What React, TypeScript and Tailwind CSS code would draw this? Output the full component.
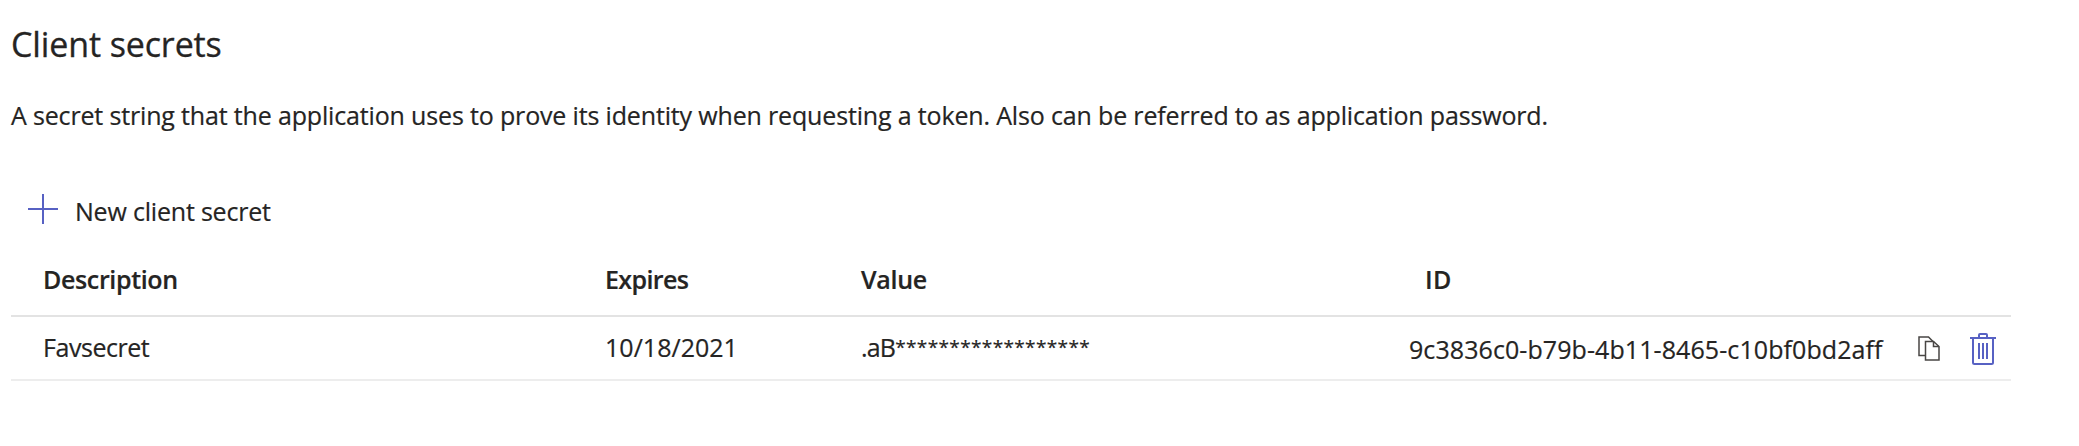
function PlusIcon() {
  return (
    <svg width="30" height="30" viewBox="0 0 30 30" fill="none" stroke="#5761c3" strokeWidth="2">
      <path d="M15 0v30M0 15h30" />
    </svg>
  );
}

function CopyIcon() {
  return (
    <svg width="22" height="25" viewBox="0 0 22 25" fill="none" stroke="#484644" strokeWidth="1.5">
      <path d="M7 19.500H1V1h9.500l4.500 4.500" />
      <path d="M7.500 5.500h8l5.500 5v13.500H7.500z" />
      <path d="M15.500 5.500v5H21" />
    </svg>
  );
}

function TrashIcon() {
  return (
    <svg width="26" height="32" viewBox="0 0 26 32" fill="none" stroke="#5761c3" strokeWidth="2">
      <path d="M0 5h26M9 5V2q0-1 1-1h6q1 0 1 1v3" />
      <path d="M3 5v24.500q0 1.500 1.500 1.500h17q1.500 0 1.500-1.500V5" />
      <path d="M9 10v16M13 10v16M17 10v16" />
    </svg>
  );
}

export default function App() {
  return (
    <main className="h-[446px] w-full bg-white pt-5 pl-[11px] font-['Open_Sans',sans-serif] text-[25px] leading-8 whitespace-nowrap text-[#252423]">
      <h1 className="text-[34px] leading-[48px] tracking-[-0.12px] [-webkit-text-stroke:0.3px_#252423]">Client secrets</h1>
      <p className="mt-[31px] tracking-[-0.16px] [-webkit-text-stroke:0.2px_#252423]">
        A secret string that the application uses to prove its identity when requesting a token. Also can be referred to
        as application password.
      </p>
      <button className="mt-[63px] flex h-[34px] items-start gap-[17px] pl-[17px]">
        <PlusIcon />
        <span className="pt-px tracking-[-0.2px] [-webkit-text-stroke:0.2px_#252423]">New client secret</span>
      </button>
      <div className="w-[2000px] [-webkit-text-stroke:0.2px_#252423]">
        <div className="mt-[35px] flex h-[54px] border-b-2 border-[#e3e3e3] pl-8 font-semibold">
          <span className="w-[562px] tracking-[-0.35px]">Description</span>
          <span className="w-[256px] tracking-[-0.6px]">Expires</span>
          <span className="w-[564px] tracking-[-0.27px]">Value</span>
          <span className="tracking-[0.4px]">ID</span>
        </div>
        <div className="flex h-16 border-b-2 border-[#ededed] pt-[14px] pl-8">
          <span className="w-[562px] tracking-[-0.45px]">Favsecret</span>
          <span className="w-[256px] tracking-[0.02px]">10/18/2021</span>
          <span className="flex w-[548px]">
            <span className="tracking-[-0.8px]">.aB</span>
            <span className="text-[19px] tracking-[0.36px]">******************</span>
          </span>
          <span className="w-[509px] pt-0.5 tracking-[0.08px]">9c3836c0-b79b-4b11-8465-c10bf0bd2aff</span>
          <div className="flex items-start gap-[30px]">
            <span className="pt-[5px]"><CopyIcon /></span>
            <span className="pt-0.5"><TrashIcon /></span>
          </div>
        </div>
      </div>
    </main>
  );
}
